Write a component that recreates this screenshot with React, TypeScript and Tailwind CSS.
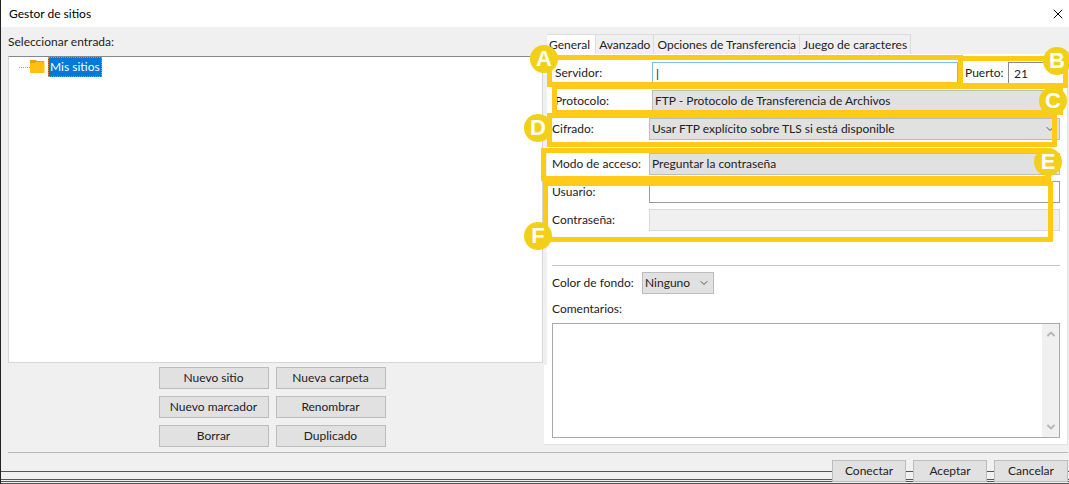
import type { ReactNode } from "react";
import { ChevronDown, ChevronUp, X } from "lucide-react";
import clsx from "clsx";

const tabs = [
  { label: "General", isActive: true },
  { label: "Avanzado", isActive: false },
  { label: "Opciones de Transferencia", isActive: false },
  { label: "Juego de caracteres", isActive: false },
];

const siteActions = [
  "Nuevo sitio",
  "Nueva carpeta",
  "Nuevo marcador",
  "Renombrar",
  "Borrar",
  "Duplicado",
];

const dialogActions = ["Conectar", "Aceptar", "Cancelar"];

// Frames are anchored to the tab panel, so they stretch together with the fields.
const frames = [
  { key: "A", className: "left-[3px] right-[104px] top-px h-8" },
  { key: "B", className: "-right-px top-[2px] h-8 w-[110px]" },
  { key: "C", className: "left-2 right-1 top-[30px] h-[31px]" },
  { key: "D", className: "left-[3px] right-[10px] top-[59px] h-[34px]" },
  { key: "E", className: "-left-[3px] right-4 top-[94px] h-[33px]" },
  { key: "F", className: "-left-px right-[14px] top-[127px] h-[61px]" },
];

const badges = [
  { letter: "A", className: "-left-[14px] -top-[9px]" },
  { letter: "B", className: "-right-1 -top-[7px]" },
  { letter: "C", className: "right-0 top-[33px]" },
  { letter: "D", className: "-left-5 top-[60px]" },
  { letter: "E", className: "right-[5px] top-[94px]" },
  { letter: "F", className: "-left-5 top-[168px]" },
];

export default function App() {
  return (
    <main className="flex w-full flex-col overflow-hidden border-l border-[#222222] bg-[#f0f0f0] font-['Lato','Open_Sans',sans-serif] text-[12px] leading-4 text-[#222222]">
      <header className="flex h-[27px] items-center justify-between bg-white pl-2 pr-[3px]">
        <h1 className="text-black">Gestor de sitios</h1>
        <button type="button" aria-label="Cerrar" className="text-black">
          <X aria-hidden="true" className="size-4" strokeWidth={1.5} />
        </button>
      </header>

      <div className="grid grid-cols-[minmax(0,536fr)_minmax(0,524fr)] pl-[7px] pr-px">
        <SiteTree />
        <section className="pt-[7px]">
          <TabBar />
          <GeneralPanel />
        </section>
      </div>

      <div className="ml-[7px] mr-px mt-[5px] border-t border-[#b9b9b9]" />
      <DialogFooter />
    </main>
  );
}

function SiteTree() {
  return (
    <section className="flex flex-col pt-[7px]">
      <h2>Seleccionar entrada:</h2>
      <ul
        role="tree"
        className="mr-px mt-[6px] min-h-[307px] flex-1 border border-[#d5d5da] border-t-[#828790] bg-white pl-[10px]"
      >
        <li role="treeitem" className="flex items-center">
          <span className="w-[11px] border-t border-dotted border-[#999999]" />
          <FolderIcon />
          <span className="ml-[3px] border border-dotted border-[#e08a3c] bg-[#0078d7] px-px py-px text-white">
            Mis sitios
          </span>
        </li>
      </ul>
      <div className="mt-1 grid grid-cols-[110px_110px] justify-center gap-x-[7px] gap-y-[7px] pr-2">
        {siteActions.map((label) => (
          <PushButton key={label}>{label}</PushButton>
        ))}
      </div>
    </section>
  );
}

function TabBar() {
  return (
    <div role="tablist" className="flex h-5 pl-[3px]">
      {tabs.map((tab) => (
        <button
          key={tab.label}
          type="button"
          role="tab"
          aria-selected={tab.isActive}
          className={clsx(
            "whitespace-nowrap border-r border-t border-[#dcdcdc]",
            tab.isActive ? "bg-white pl-[2px] pr-[5px]" : "bg-[#f0f0f0] px-[3px]",
          )}
        >
          {tab.label}
        </button>
      ))}
    </div>
  );
}

function GeneralPanel() {
  return (
    <div
      role="tabpanel"
      className="relative border-b border-r border-[#e2e2e2] bg-white pb-[6px] pl-2 pr-[7px] pt-2"
    >
      <div className="absolute left-0 top-0 h-[311px] w-[3px] bg-[#f0f0f0]" />

      <div className="flex flex-col gap-[6px]">
        <div className="-mr-[6px] flex h-[22px] items-center pl-[3px]">
          <label htmlFor="host" className="w-[97px]">
            Servidor:
          </label>
          <input
            id="host"
            type="text"
            defaultValue="|"
            className="h-full min-w-0 flex-1 border border-[#7fbdf0] bg-white px-[3px] outline-none"
          />
          <label htmlFor="port" className="ml-[7px] w-[43px]">
            Puerto:
          </label>
          <input
            id="port"
            type="text"
            defaultValue="21"
            className="h-full w-[58px] border border-[#8a8a8a] bg-white px-[5px] outline-none"
          />
        </div>
        <SelectRow
          id="protocol"
          label="Protocolo:"
          value="FTP - Protocolo de Transferencia de Archivos"
          isInset
        />
        <SelectRow
          id="encryption"
          label="Cifrado:"
          value="Usar FTP explícito sobre TLS si está disponible"
        />
      </div>

      <div className="mt-[13px] flex flex-col gap-[6px]">
        <SelectRow id="logon" label="Modo de acceso:" value="Preguntar la contraseña" />
        <div className="flex h-[22px] items-center">
          <label htmlFor="user" className="w-[97px]">
            Usuario:
          </label>
          <input
            id="user"
            type="text"
            className="h-full min-w-0 flex-1 border border-[#9a9a9a] bg-white px-[2px] outline-none"
          />
        </div>
        <div className="flex h-[22px] items-center">
          <label htmlFor="password" className="w-[97px]">
            Contraseña:
          </label>
          <input
            id="password"
            type="password"
            disabled
            className="h-full min-w-0 flex-1 border border-[#d9d9d9] bg-[#f0f0f0] px-[2px]"
          />
        </div>
      </div>

      <hr className="mt-[34px] border-[#c4c4c4]" />

      <div className="mt-[6px] flex h-[22px] items-center">
        <label htmlFor="color" className="w-[90px]">
          Color de fondo:
        </label>
        <div className="h-full w-[72px]">
          <ComboBox id="color" value="Ninguno" />
        </div>
      </div>

      <label htmlFor="comments" className="mt-[7px] block">
        Comentarios:
      </label>
      <div className="mt-[6px] flex h-[115px] border border-[#a9a9a9]">
        <textarea
          id="comments"
          className="min-w-0 flex-1 resize-none bg-white p-1 outline-none"
        />
        <div className="flex w-[17px] flex-col items-center justify-between bg-[#f0f0f0] py-1 text-[#b8b8b8]">
          <ChevronUp aria-hidden="true" className="size-3" strokeWidth={4} />
          <ChevronDown aria-hidden="true" className="size-3" strokeWidth={4} />
        </div>
      </div>

      {frames.map((frame) => (
        <div
          key={frame.key}
          className={clsx(
            "pointer-events-none absolute border-[5px] border-[#ffca18]",
            frame.className,
          )}
        />
      ))}
      {badges.map((badge) => (
        <span
          key={badge.letter}
          className={clsx(
            "absolute flex size-7 items-center justify-center rounded-full bg-[#f2d01a] font-['Liberation_Sans',sans-serif] text-[22px] font-bold leading-none text-white",
            badge.className,
          )}
        >
          {badge.letter}
        </span>
      ))}
    </div>
  );
}

function SelectRow({
  id,
  label,
  value,
  isInset = false,
}: {
  id: string;
  label: string;
  value: string;
  isInset?: boolean;
}) {
  return (
    <div className={clsx("flex h-[22px] items-center", isInset && "pl-[3px]")}>
      <label htmlFor={id} className="w-[97px] whitespace-nowrap">
        {label}
      </label>
      <div className="h-full min-w-0 flex-1">
        <ComboBox id={id} value={value} />
      </div>
    </div>
  );
}

function ComboBox({ id, value }: { id: string; value: string }) {
  return (
    <div className="relative h-full">
      <select
        id={id}
        className="h-full w-full appearance-none border border-[#bdbdbd] bg-[#e1e1e1] px-[2px] outline-none"
      >
        <option>{value}</option>
      </select>
      <ChevronDown
        aria-hidden="true"
        className="pointer-events-none absolute right-1 top-[5px] size-3 text-[#555555]"
        strokeWidth={2}
      />
    </div>
  );
}

function DialogFooter() {
  return (
    <footer className="relative flex justify-end gap-[7px] pb-[2px] pr-px pt-[7px]">
      <div className="absolute inset-x-0 bottom-0 h-[13px] border-t border-[#555555]" />
      <div className="absolute inset-x-0 bottom-0 h-[5px] border-y border-[#555555]" />
      <div className="absolute inset-x-0 bottom-[2px] border-t border-[#555555]" />
      {dialogActions.map((label) => (
        <div key={label} className="relative grid w-[74px]">
          <PushButton>{label}</PushButton>
        </div>
      ))}
    </footer>
  );
}

function PushButton({ children }: { children: ReactNode }) {
  return (
    <button
      type="button"
      className="h-[22px] whitespace-nowrap border border-[#bcbcbc] bg-[#e1e1e1]"
    >
      {children}
    </button>
  );
}

function FolderIcon() {
  return (
    <svg aria-hidden="true" viewBox="0 0 15 14" className="h-[14px] w-[15px]">
      <path d="M0 0h6l1 1h7v4H0z" fill="#e8a010" />
      <path d="M0 3h5l1-1h8.500v11H0z" fill="#ffc010" />
    </svg>
  );
}
